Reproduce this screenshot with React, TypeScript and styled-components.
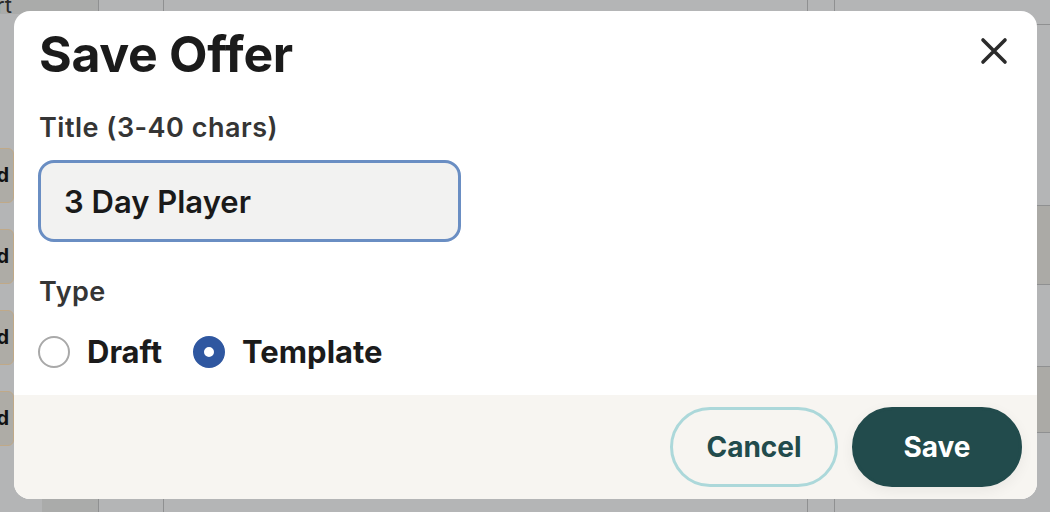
import { useState } from 'react';
import styled, { createGlobalStyle } from 'styled-components';

const GlobalStyle = createGlobalStyle`
  html, body {
    margin: 0;
    padding: 0;
    background: #b4b5b6;
  }
  * {
    box-sizing: border-box;
  }
`;

const Page = styled.div`
  position: relative;
  width: 1050px;
  height: 512px;
  overflow: hidden;
  background: #b4b5b6;
  font-family: Inter, "Noto Sans", sans-serif;
`;

// dimmed page behind the dialog
const Behind = styled.div`
  display: flex;
  height: 100%;
`;

const SideCol = styled.div`
  width: 42px;
  display: flex;
  flex-direction: column;
`;

const CornerCell = styled.div`
  height: 14px;
  background: #aaabaa;
  color: #2a2a2a;
  font-size: 22px;
  line-height: 10px;
  overflow: hidden;
  text-indent: -4px;
`;

const ChipList = styled.div`
  display: flex;
  flex-direction: column;
  gap: 26px;
  margin-top: 134px;
`;

const Chip = styled.div`
  height: 55px;
  width: 30px;
  margin-left: -16px;
  background: #aeaca6;
  border: 1px solid #c0a988;
  border-radius: 6px;
  font-weight: 700;
  font-size: 20px;
  line-height: 53px;
  text-align: right;
  padding-right: 4px;
  color: #111;
`;

const Column = styled.div<{ $w: number; $tone?: string }>`
  width: ${(p) => p.$w}px;
  background: ${(p) => p.$tone || 'transparent'};
  border-right: 1px solid #8f9091;
`;

const RightArea = styled.div`
  flex: 1;
  display: flex;
  flex-direction: column;
`;

const RightBand = styled.div<{ $h: number; $tone?: string }>`
  height: ${(p) => p.$h}px;
  background: ${(p) => p.$tone || 'transparent'};
  border-bottom: 1px solid #8f9091;
`;

const Overlay = styled.div`
  position: absolute;
  inset: 0;
  padding: 11px 13px 13px 14px;
  display: flex;
`;

const Dialog = styled.div`
  flex: 1;
  display: flex;
  flex-direction: column;
  background: #fff;
  border-radius: 16px;
  overflow: hidden;
`;

const Body = styled.div`
  flex: 1;
  padding: 20px 27px 0 25px;
`;

const Header = styled.div`
  display: flex;
  justify-content: space-between;
  align-items: center;
  height: 46px;
`;

const Heading = styled.h2`
  margin: 0;
  font-size: 50px;
  font-weight: 700;
  letter-spacing: -0.3px;
  color: #1b1b1b;
`;

const CloseBtn = styled.button`
  width: 32px;
  height: 32px;
  margin-bottom: 7px;
  padding: 0;
  border: none;
  background: none;
  display: flex;
  align-items: center;
  justify-content: center;
  color: #2b2b2b;
  cursor: pointer;
`;

const Label = styled.label`
  display: block;
  font-size: 27px;
  font-weight: 600;
  letter-spacing: 0.5px;
  color: #353535;
  line-height: 30px;
`;

const TitleLabel = styled(Label)`
  margin-top: 36px;
`;

const TypeLabel = styled(Label)`
  margin-top: 35px;
`;

const TextInput = styled.input`
  display: block;
  margin-top: 17px;
  margin-left: -1px;
  width: 423px;
  height: 82px;
  border: 3px solid #6a8ec3;
  border-radius: 16px;
  background: #f2f2f1;
  padding: 0 0 0 23px;
  font-family: inherit;
  font-size: 31px;
  font-weight: 600;
  color: #1a1a1a;
  outline: none;
`;

const RadioRow = styled.div`
  display: flex;
  align-items: center;
  gap: 31px;
  margin-top: 27px;
  margin-left: -1px;
`;

const RadioOption = styled.label`
  display: flex;
  align-items: center;
  gap: 17px;
  font-size: 31px;
  line-height: 36px;
  font-weight: 700;
  color: #1b1b1b;
  cursor: pointer;
`;

const RadioDot = styled.span<{ $checked: boolean }>`
  width: 32px;
  height: 32px;
  border-radius: 50%;
  border: ${(p) => (p.$checked ? '11px solid #2f57a0' : '2px solid #a9a9a9')};
  background: #fff;
`;

const Footer = styled.div`
  height: 104px;
  background: #f7f5f1;
  display: flex;
  justify-content: flex-end;
  align-items: center;
  gap: 14px;
  padding: 0 15px;
`;

const Button = styled.button<{ $primary?: boolean }>`
  height: 80px;
  width: ${(p) => (p.$primary ? 170 : 168)}px;
  border-radius: 40px;
  border: 3px solid ${(p) => (p.$primary ? '#224b4c' : '#acd8da')};
  background: ${(p) => (p.$primary ? '#224b4c' : 'transparent')};
  color: ${(p) => (p.$primary ? '#fff' : '#224b4c')};
  font-family: inherit;
  font-size: 28px;
  font-weight: 700;
  cursor: pointer;
  box-shadow: ${(p) => (p.$primary ? '0 4px 14px rgba(0,0,0,0.06)' : 'none')};
`;

export default function App() {
  const [title, setTitle] = useState('3 Day Player');
  const [type, setType] = useState<'draft' | 'template'>('template');

  return (
    <Page>
      <GlobalStyle />
      <Behind>
        <SideCol>
          <CornerCell>rt</CornerCell>
          <ChipList>
            <Chip>d</Chip>
            <Chip>d</Chip>
            <Chip>d</Chip>
            <Chip>d</Chip>
          </ChipList>
        </SideCol>
        <Column $w={57} $tone="#aaabaa" />
        <Column $w={65} />
        <Column $w={644} />
        <Column $w={27} />
        <RightArea>
          <RightBand $h={25} />
          <RightBand $h={181} />
          <RightBand $h={79} $tone="#abaaa6" />
          <RightBand $h={82} />
          <RightBand $h={66} $tone="#abaaa6" />
        </RightArea>
      </Behind>

      <Overlay>
        <Dialog role="dialog" aria-label="Save Offer">
          <Body>
            <Header>
              <Heading>Save Offer</Heading>
              <CloseBtn aria-label="Close">
                <svg width="28" height="28" viewBox="0 0 28 28" fill="none">
                  <path
                    d="M3 3L25 25M25 3L3 25"
                    stroke="currentColor"
                    strokeWidth="3.6"
                    strokeLinecap="round"
                  />
                </svg>
              </CloseBtn>
            </Header>

            <TitleLabel htmlFor="offer-title">Title (3-40 chars)</TitleLabel>
            <TextInput
              id="offer-title"
              value={title}
              onChange={(e) => setTitle(e.target.value)}
            />

            <TypeLabel>Type</TypeLabel>
            <RadioRow>
              <RadioOption onClick={() => setType('draft')}>
                <RadioDot $checked={type === 'draft'} />
                Draft
              </RadioOption>
              <RadioOption onClick={() => setType('template')}>
                <RadioDot $checked={type === 'template'} />
                Template
              </RadioOption>
            </RadioRow>
          </Body>

          <Footer>
            <Button>Cancel</Button>
            <Button $primary>Save</Button>
          </Footer>
        </Dialog>
      </Overlay>
    </Page>
  );
}
